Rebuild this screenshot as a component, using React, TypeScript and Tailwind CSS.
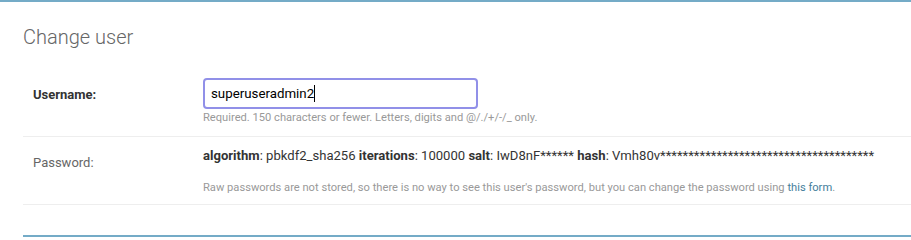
import React from "react";

export default function App() {
  return (
    <div
      className="w-[911px] h-[237px] bg-white overflow-hidden"
      style={{ fontFamily: "Roboto, 'Liberation Sans', sans-serif" }}
    >
      <div className="h-[2px] bg-[#74abc7]" />
      <div className="pl-[23px]">
        <h1 className="pt-[23px] text-[20px] leading-[24px] font-light text-[#666]">
          Change user
        </h1>
        <div className="mt-[19px]">
          {/* Username row */}
          <div className="h-[69px] border-b border-[#eee] pl-[10px] pt-[10px] box-border flex">
            <div className="w-[170px] shrink-0 pt-[9px] text-[13px] leading-[16px] font-bold text-[#333]">
              Username:
            </div>
            <div>
              <div className="w-[275px] h-[31px] border-2 border-[#9190e8] rounded-[4px] pl-[6px] flex items-center text-[13.3px] text-black">
                <span>superuseradmin2</span>
                <span className="inline-block w-[1px] h-[17px] bg-black" />
              </div>
              <p className="mt-[2px] text-[11.15px] leading-[13px] text-[#999]">
                Required. 150 characters or fewer. Letters, digits and @/./+/-/_ only.
              </p>
            </div>
          </div>
          {/* Password row */}
          <div className="h-[68px] border-b border-[#eee] pl-[10px] box-border flex">
            <div className="w-[170px] shrink-0 pt-[18px] text-[13px] leading-[16px] text-[#666]">
              Password:
            </div>
            <div className="pt-[11px]">
              <div className="text-[13.08px] leading-[16px] text-[#333] whitespace-nowrap">
                <strong className="font-bold">algorithm</strong>: pbkdf2_sha256{" "}
                <strong className="font-bold">iterations</strong>: 100000{" "}
                <strong className="font-bold">salt</strong>: IwD8nF******{" "}
                <strong className="font-bold">hash</strong>: Vmh80v**************************************
              </div>
              <p className="mt-[17px] text-[11.15px] leading-[13px] text-[#999] whitespace-nowrap">
                Raw passwords are not stored, so there is no way to see this user's password, but you can change the password using{" "}
                <a className="text-[#447e9b]">this form</a>.
              </p>
            </div>
          </div>
          <div className="h-[30px]" />
          <div className="h-[2px] bg-[#74abc7]" />
        </div>
      </div>
    </div>
  );
}
